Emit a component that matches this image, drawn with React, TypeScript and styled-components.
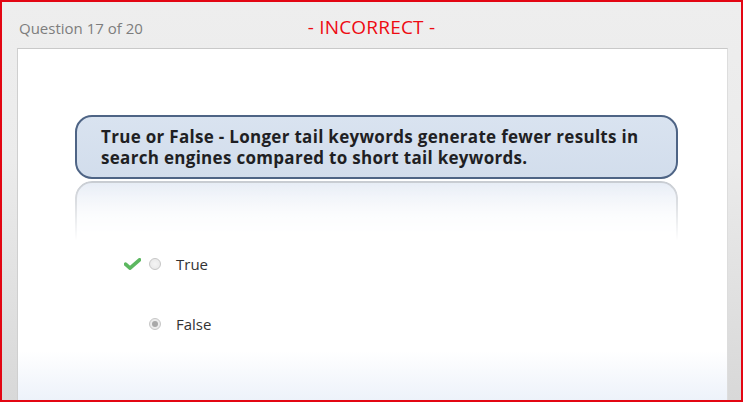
import styled, { createGlobalStyle } from 'styled-components';

const GlobalStyle = createGlobalStyle`
  html, body {
    margin: 0;
    padding: 0;
    background: #ffffff;
  }
  * {
    box-sizing: border-box;
  }
`;

const options = [
  { label: 'True', correct: true, selected: false },
  { label: 'False', correct: false, selected: true },
];

const App = () => {
  return (
    <>
      <GlobalStyle />
      <Frame>
        <Header>
          <Counter>Question 17 of 20</Counter>
          <Status>- INCORRECT -</Status>
          <span />
        </Header>
        <Panel>
          <QuestionBox>
            True or False - Longer tail keywords generate fewer results in search engines compared to short tail
            keywords.
          </QuestionBox>
          <Reflection />
          <OptionList>
            {options.map((o) => (
              <OptionRow key={o.label}>
                <Mark>
                  {o.correct ? (
                    <svg width="17" height="12" viewBox="0 0 17 12">
                      <path
                        d="M1.5 6.2 L6 10.2 L15.5 1.8"
                        fill="none"
                        stroke="#5cb860"
                        strokeWidth="3.6"
                        strokeLinecap="round"
                        strokeLinejoin="round"
                      />
                    </svg>
                  ) : null}
                </Mark>
                <Radio $checked={o.selected} />
                <OptionLabel>{o.label}</OptionLabel>
              </OptionRow>
            ))}
          </OptionList>
        </Panel>
      </Frame>
    </>
  );
};

const Frame = styled.div`
  width: 743px;
  height: 402px;
  border: 2px solid #e30613;
  background: linear-gradient(to bottom, #eeeeee 0%, #ebebeb 40%, #d8d8d8 100%);
  display: flex;
  flex-direction: column;
  font-family: 'Open Sans', 'Liberation Sans', sans-serif;
`;

const Header = styled.div`
  height: 46px;
  display: grid;
  grid-template-columns: 1fr auto 1fr;
  align-items: center;
`;

const Counter = styled.div`
  font-size: 15px;
  color: #7d7d7d;
  padding: 6px 0 0 17px;
`;

const Status = styled.div`
  font-size: 19px;
  color: #ee0a12;
  letter-spacing: 0.2px;
  padding-top: 4px;
`;

const Panel = styled.div`
  flex: 1;
  margin: 0 13px 0 15px;
  border-top: 1px solid #c9c9c9;
  border-left: 1px solid #cfcfcf;
  border-right: 1px solid #dddddd;
  background: linear-gradient(to bottom, #ffffff 0%, #ffffff 86%, #edf2fa 100%);
  display: flex;
  flex-direction: column;
  padding: 66px 49px 0 57px;
`;

const QuestionBox = styled.div`
  height: 64px;
  border: 2px solid #4e6485;
  border-radius: 17px;
  background: linear-gradient(to bottom, #d9e3f0 0%, #d2ddec 100%);
  padding: 9px 20px 0 24px;
  font-size: 17px;
  font-weight: 700;
  letter-spacing: 0.3px;
  line-height: 21px;
  color: #1f1f24;
`;

const Reflection = styled.div`
  height: 60px;
  margin-top: 2px;
  border: 2px solid #c8ccd2;
  border-bottom: none;
  border-radius: 17px 17px 0 0;
  background: linear-gradient(to bottom, #e6ecf5 0%, #f7f9fc 60%, #ffffff 100%);
  -webkit-mask-image: linear-gradient(to bottom, rgba(0, 0, 0, 1) 0%, rgba(0, 0, 0, 0.5) 50%, rgba(0, 0, 0, 0) 100%);
  mask-image: linear-gradient(to bottom, rgba(0, 0, 0, 1) 0%, rgba(0, 0, 0, 0.5) 50%, rgba(0, 0, 0, 0) 100%);
`;

const OptionList = styled.div`
  display: flex;
  flex-direction: column;
  gap: 40px;
  margin-top: 13px;
  padding-left: 49px;
`;

const OptionRow = styled.div`
  height: 20px;
  display: flex;
  align-items: center;
`;

const Mark = styled.div`
  width: 26px;
  display: flex;
  align-items: center;
`;

const Radio = styled.div<{ $checked: boolean }>`
  width: 12px;
  height: 12px;
  border-radius: 50%;
  border: 1px solid #c6c6c6;
  background: radial-gradient(circle, #f4f4f4 0%, #e6e6e6 100%);
  display: flex;
  align-items: center;
  justify-content: center;
  margin-right: 15px;
  margin-left: -1px;

  &::after {
    content: '';
    display: ${(p) => (p.$checked ? 'block' : 'none')};
    width: 6px;
    height: 6px;
    border-radius: 50%;
    background: #a8a8a8;
  }
`;

const OptionLabel = styled.span`
  font-size: 15px;
  color: #333333;
`;

export default App;
